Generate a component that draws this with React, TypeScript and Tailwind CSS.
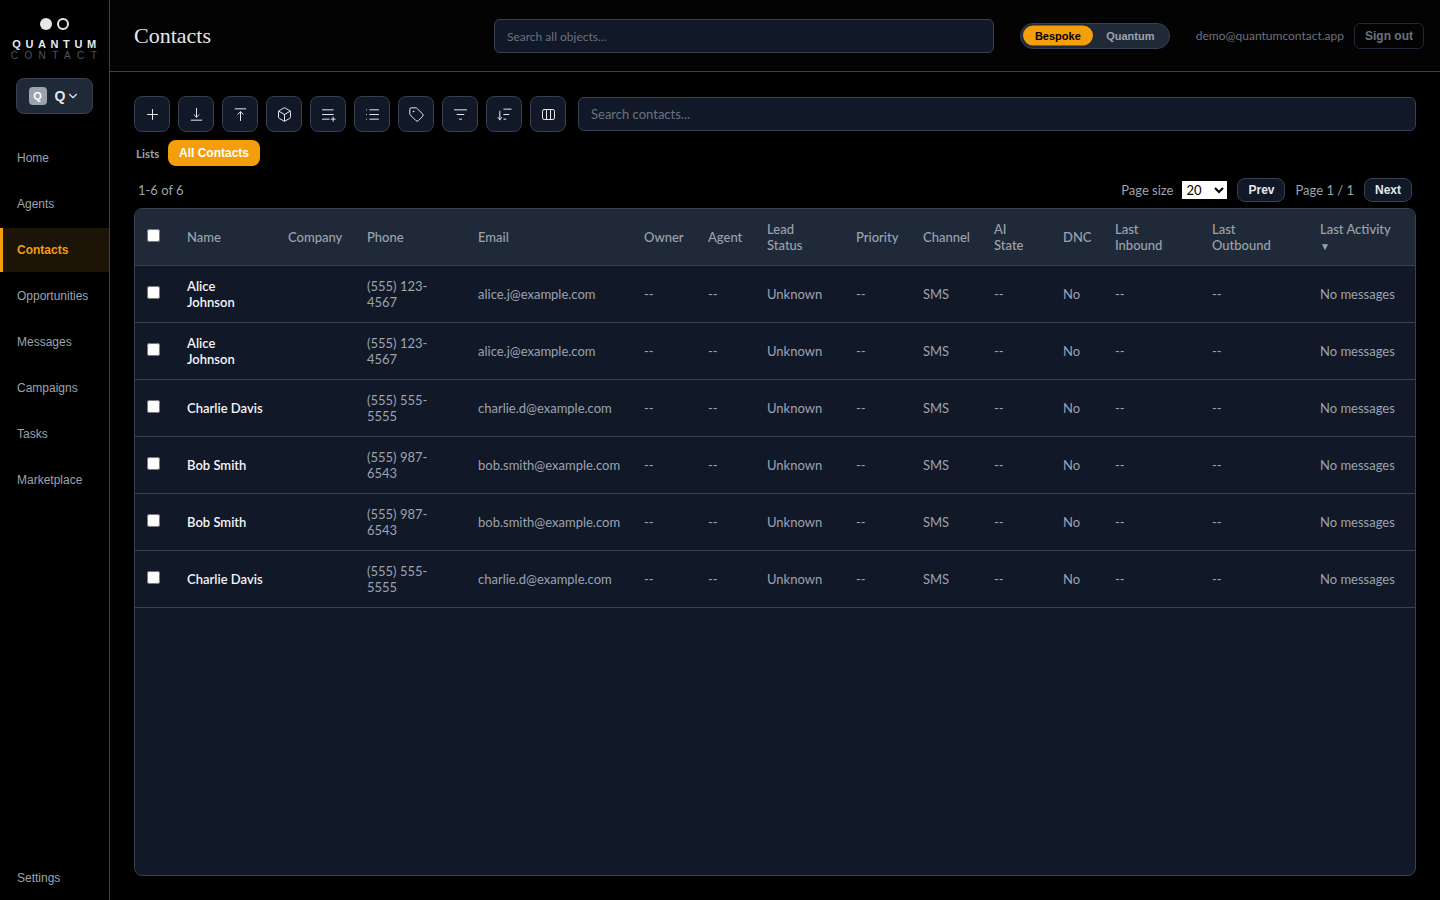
import type { ReactNode } from "react";
import { Box, ChevronDown, List, Tag } from "lucide-react";

const nav = ["Home", "Agents", "Contacts", "Opportunities", "Messages", "Campaigns", "Tasks", "Marketplace"];

function Glyph({ children }: { children: ReactNode }) {
  return (
    <svg width="16" height="16" viewBox="0 0 24 24" fill="none" stroke="currentColor" strokeWidth="1.5" strokeLinecap="round" strokeLinejoin="round" className="translate-x-[0.5px] translate-y-[0.5px]">
      {children}
    </svg>
  );
}

const tools = [
  <Glyph><path d="M4.5 12h15M12 4.5v15" /></Glyph>,
  <Glyph><path d="M12 3v13M8.5 12.5 12 16l3.5-3.5M4 20.5h16" /></Glyph>,
  <Glyph><path d="M4 3.5h16M12 21V8M8 11.5 12 8l4 3.5" /></Glyph>,
  <Box size={16} strokeWidth={1.5} className="translate-x-[0.5px] translate-y-[0.5px]" />,
  <Glyph><path d="M3 5h16M3 12h16M3 19h10M19 16v6M16 19h6" /></Glyph>,
  <List size={16} strokeWidth={1.5} className="translate-x-[0.5px] translate-y-[0.5px]" />,
  <Tag size={16} strokeWidth={1.5} className="translate-x-[0.5px] translate-y-[0.5px]" />,
  <Glyph><path d="M3 5h18M7 12h10M10.5 19h3" /></Glyph>,
  <Glyph><path d="M5 7v13M2.5 16.5 5 20l2.5-3.5M11 4h11M11 12h7.5M11 19h3" /></Glyph>,
  <Glyph><rect x="3" y="4.5" width="18" height="15" rx="2.5" /><path d="M9 4.5v15M15 4.5v15" /></Glyph>,
];

const columns = [
  { label: "Name", w: "w-[101px]" },
  { label: "Company", w: "w-[79px]" },
  { label: "Phone", w: "w-[111px]" },
  { label: "Email", w: "w-[166px]" },
  { label: "Owner", w: "w-[64px]" },
  { label: "Agent", w: "w-[59px]" },
  { label: "Lead Status", w: "w-[89px]" },
  { label: "Priority", w: "w-[67px]" },
  { label: "Channel", w: "w-[71px]" },
  { label: "AI State", w: "w-[69px]" },
  { label: "DNC", w: "w-[52px]" },
  { label: "Last Inbound", w: "w-[97px]" },
  { label: "Last Outbound", w: "w-[108px]" },
];

const contacts = [
  { name: "Alice Johnson", phone: "(555) 123-4567", email: "alice.j@example.com" },
  { name: "Alice Johnson", phone: "(555) 123-4567", email: "alice.j@example.com" },
  { name: "Charlie Davis", phone: "(555) 555-5555", email: "charlie.d@example.com" },
  { name: "Bob Smith", phone: "(555) 987-6543", email: "bob.smith@example.com" },
  { name: "Bob Smith", phone: "(555) 987-6543", email: "bob.smith@example.com" },
  { name: "Charlie Davis", phone: "(555) 555-5555", email: "charlie.d@example.com" },
];

const arial = "font-['Liberation_Sans',Arial,sans-serif]";

function Sidebar() {
  return (
    <aside className={`flex h-[900px] w-[110px] shrink-0 flex-col border-r border-[#374151] bg-black ${arial}`}>
      <div className="flex flex-col items-center pt-[18px]">
        <div className="flex items-center gap-[5px]">
          <span className="h-[12px] w-[12px] rounded-full bg-[#e5e7eb]" />
          <span className="h-[12px] w-[12px] rounded-full border-2 border-[#e5e7eb]" />
        </div>
        <div className="mt-[9px] pl-[4px] text-[11px] font-bold leading-[11px] tracking-[4.6px] text-[#e5e7eb]">QUANTUM</div>
        <div className="pl-[5px] text-[10px] leading-[11px] tracking-[6.4px] text-[#4b5563]">CONTACT</div>
      </div>
      <div className="mt-[17px] flex justify-center">
        <div className="flex h-[36px] w-[77px] items-center justify-center rounded-lg border border-[#374151] bg-[#1f2937] text-[#e5e7eb]">
          <span className="flex h-[18px] w-[18px] items-center justify-center rounded bg-[#9ca3af] text-[11px] font-bold text-white">Q</span>
          <span className="ml-[8px] text-[14px] font-bold">Q</span>
          <ChevronDown size={14} strokeWidth={2} className="ml-[1px]" />
        </div>
      </div>
      <nav className="mt-[22px] flex flex-col gap-[2px]">
        {nav.map((item) =>
          item === "Contacts" ? (
            <a key={item} className="flex h-[44px] items-center border-l-[3px] border-[#f59e0b] bg-[#1c1407] pl-[14px] text-[12px] font-bold text-[#f59e0b]">
              {item}
            </a>
          ) : (
            <a key={item} className="flex h-[44px] items-center pl-[17px] text-[12px] text-[#9ca3af]">
              {item}
            </a>
          )
        )}
      </nav>
      <a className="mt-auto pb-[15px] pl-[17px] text-[12px] leading-[14px] text-[#9ca3af]">Settings</a>
    </aside>
  );
}

function TopBar() {
  return (
    <header className="flex h-[72px] shrink-0 items-center border-b border-[#374151] bg-[#030303] pl-[24px] pr-[16px]">
      <h1 className="w-[360px] font-['Liberation_Serif',serif] text-[22px] font-normal leading-[28px] text-[#e5e7eb]">Contacts</h1>
      <div className="flex h-[34px] w-[500px] items-center rounded-md border border-[#374151] bg-[#111827] px-[12px] pt-[2px] text-[12px] text-[#6b7280]">
        Search all objects...
      </div>
      <div className={`ml-[26px] flex h-[26px] w-[150px] items-center rounded-full border border-[#374151] bg-[#1f2937] px-[2px] pt-[1px] text-[11px] font-bold ${arial}`}>
        <span className="flex h-[20px] w-[70px] -translate-y-[0.5px] items-center justify-center rounded-full bg-[#f59e0b] text-black">Bespoke</span>
        <span className="flex-1 pl-[1px] text-center text-[#9ca3af]">Quantum</span>
      </div>
      <span className="ml-[26px] text-[12px] text-[#6b7280]">demo@quantumcontact.app</span>
      <button className={`ml-[10px] h-[26px] w-[70px] rounded-md border border-[#1f2937] text-[12px] font-bold text-[#6b7280] ${arial}`}>Sign out</button>
    </header>
  );
}

function Toolbar() {
  return (
    <div className="flex items-center gap-[12px]">
      <div className="flex gap-[8px]">
        {tools.map((icon, i) => (
          <button key={i} className="flex h-[36px] w-[36px] items-center justify-center rounded-lg border border-[#374151] bg-[#111827] text-[#e5e7eb]">
            {icon}
          </button>
        ))}
      </div>
      <div className="flex h-[34px] flex-1 items-center rounded-md border border-[#374151] bg-[#111827] px-[12px] pt-[2px] text-[13px] text-[#6b7280]">
        Search contacts...
      </div>
    </div>
  );
}

function ContactsTable() {
  return (
    <div className="mt-[6px] h-[668px] overflow-hidden rounded-lg border border-[#374151] bg-[#111827]">
      <table className="w-full table-fixed border-collapse text-left text-[13px] leading-[16px]">
        <thead className="bg-[#1f2937]">
          <tr className="h-[56px] border-b border-[#374151]">
            <th className="w-[40px] pl-[12px] align-middle">
              <input type="checkbox" className="block h-[13px] w-[13px] -translate-y-[1px]" />
            </th>
            {columns.map((c) => (
              <th key={c.label} className={`${c.w} px-[12px] font-medium text-[#9ca3af]`}>
                {c.label}
              </th>
            ))}
            <th className="px-[12px] font-medium text-[#9ca3af]">
              Last Activity <span className="text-[10px] leading-[10px]">▼</span>
            </th>
          </tr>
        </thead>
        <tbody>
          {contacts.map((c, i) => (
            <tr key={i} className="h-[57px] border-b border-[#374151] text-[#9ca3af]">
              <td className="pl-[12px]">
                <input type="checkbox" className="block h-[13px] w-[13px] -translate-y-[1px]" />
              </td>
              <td className="px-[12px] font-semibold text-[#f3f4f6]">{c.name}</td>
              <td className="px-[12px]"></td>
              <td className="px-[12px]">{c.phone}</td>
              <td className="whitespace-nowrap px-[12px]">{c.email}</td>
              <td className="px-[12px]">--</td>
              <td className="px-[12px]">--</td>
              <td className="px-[12px]">Unknown</td>
              <td className="px-[12px]">--</td>
              <td className="px-[12px]">SMS</td>
              <td className="px-[12px]">--</td>
              <td className="px-[12px]">No</td>
              <td className="px-[12px]">--</td>
              <td className="px-[12px]">--</td>
              <td className="whitespace-nowrap px-[12px]">No messages</td>
            </tr>
          ))}
        </tbody>
      </table>
    </div>
  );
}

export default function App() {
  return (
    <div className="flex h-[900px] w-[1440px] overflow-hidden bg-black font-['Lato',sans-serif]">
      <Sidebar />
      <main className="flex min-w-0 flex-1 flex-col">
        <TopBar />
        <div className="flex flex-1 flex-col px-[24px] pt-[24px]">
          <Toolbar />
          <div className="mt-[8px] flex h-[26px] items-center">
            <span className="ml-[2px] w-[24px] pt-[2px] text-[11.5px] font-bold text-[#9ca3af]">Lists</span>
            <span className={`ml-[8px] flex h-[26px] w-[92px] items-center justify-center rounded-lg bg-[#f59e0b] text-[12px] font-bold text-white ${arial}`}>All Contacts</span>
          </div>
          <div className="mt-[12px] flex h-[24px] items-center justify-between px-[4px] text-[13px] text-[#9ca3af]">
            <span className="pt-[2px]">1-6 of 6</span>
            <div className="flex items-center">
              <span className="pt-[2px]">Page size</span>
              <select className="ml-[9px] h-[18px] w-[45px] bg-white text-[13px] leading-[16px] text-black" defaultValue="20">
                <option>20</option>
              </select>
              <button className={`ml-[10px] h-[24px] w-[48px] rounded-lg border border-[#374151] bg-[#111827] text-[12px] font-bold text-[#e5e7eb] ${arial}`}>Prev</button>
              <span className="ml-[10px] pt-[2px]">Page 1 / 1</span>
              <button className={`ml-[10px] h-[24px] w-[48px] rounded-lg border border-[#374151] bg-[#111827] text-[12px] font-bold text-[#e5e7eb] ${arial}`}>Next</button>
            </div>
          </div>
          <ContactsTable />
        </div>
      </main>
    </div>
  );
}
